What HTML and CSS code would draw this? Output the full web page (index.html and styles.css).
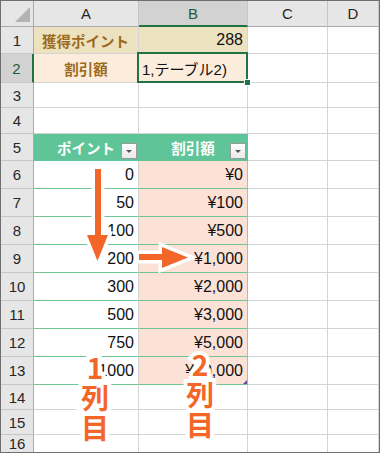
FILE: index.html
```html
<!DOCTYPE html>
<html lang="ja">
  <head>
    <meta charset="UTF-8" />
    <title>割引額</title>
    <link rel="stylesheet" href="styles.css">
  </head>
  <body>
    <div class="sheet">
      <div class="row head-row">
        <div class="cell corner">
          <svg width="32" height="25" viewBox="0 0 32 25"><polygon points="29,6 29,21 14,21" fill="#b4b4b4"/></svg>
        </div>
        <div class="cell col-head">A</div>
        <div class="cell col-head active">B</div>
        <div class="cell col-head">C</div>
        <div class="cell col-head">D</div>
      </div>

      <div class="row r1">
        <div class="cell row-head">1</div>
        <div class="cell points-cell label">獲得ポイント</div>
        <div class="cell points-cell num">288</div>
        <div class="cell"></div>
        <div class="cell"></div>
      </div>

      <div class="row r2">
        <div class="cell row-head active">2</div>
        <div class="cell rate-cell label center">割引額</div>
        <div class="cell rate-cell formula selected">1,テーブル2)<span class="fill-handle"></span></div>
        <div class="cell"></div>
        <div class="cell"></div>
      </div>

      <div class="row r3">
        <div class="cell row-head">3</div>
        <div class="cell"></div>
        <div class="cell"></div>
        <div class="cell"></div>
        <div class="cell"></div>
      </div>

      <div class="row r4">
        <div class="cell row-head">4</div>
        <div class="cell"></div>
        <div class="cell"></div>
        <div class="cell"></div>
        <div class="cell"></div>
      </div>

      <div class="row r5">
        <div class="cell row-head">5</div>
        <div class="cell table-head">ポイント<span class="filter"></span></div>
        <div class="cell table-head">割引額<span class="filter"></span></div>
        <div class="cell"></div>
        <div class="cell"></div>
      </div>

      <div class="row">
        <div class="cell row-head">6</div>
        <div class="cell t-point num">0</div>
        <div class="cell t-rate num">¥0</div>
        <div class="cell"></div>
        <div class="cell"></div>
      </div>
      <div class="row">
        <div class="cell row-head">7</div>
        <div class="cell t-point num">50</div>
        <div class="cell t-rate num">¥100</div>
        <div class="cell"></div>
        <div class="cell"></div>
      </div>
      <div class="row">
        <div class="cell row-head">8</div>
        <div class="cell t-point num">100</div>
        <div class="cell t-rate num">¥500</div>
        <div class="cell"></div>
        <div class="cell"></div>
      </div>
      <div class="row">
        <div class="cell row-head">9</div>
        <div class="cell t-point num">200</div>
        <div class="cell t-rate num">¥1,000</div>
        <div class="cell"></div>
        <div class="cell"></div>
      </div>
      <div class="row">
        <div class="cell row-head">10</div>
        <div class="cell t-point num">300</div>
        <div class="cell t-rate num">¥2,000</div>
        <div class="cell"></div>
        <div class="cell"></div>
      </div>
      <div class="row">
        <div class="cell row-head">11</div>
        <div class="cell t-point num">500</div>
        <div class="cell t-rate num">¥3,000</div>
        <div class="cell"></div>
        <div class="cell"></div>
      </div>
      <div class="row">
        <div class="cell row-head">12</div>
        <div class="cell t-point num">750</div>
        <div class="cell t-rate num">¥5,000</div>
        <div class="cell"></div>
        <div class="cell"></div>
      </div>
      <div class="row">
        <div class="cell row-head">13</div>
        <div class="cell t-point num">1000</div>
        <div class="cell t-rate num last">¥10,000<span class="resize"></span></div>
        <div class="cell"></div>
        <div class="cell"></div>
      </div>

      <div class="row r14">
        <div class="cell row-head">14</div>
        <div class="cell"></div>
        <div class="cell"></div>
        <div class="cell"></div>
        <div class="cell"></div>
      </div>
      <div class="row r15">
        <div class="cell row-head">15</div>
        <div class="cell"></div>
        <div class="cell"></div>
        <div class="cell"></div>
        <div class="cell"></div>
      </div>
      <div class="row r16">
        <div class="cell row-head">16</div>
        <div class="cell"></div>
        <div class="cell"></div>
        <div class="cell"></div>
        <div class="cell"></div>
      </div>

      <!-- annotations drawn over the sheet -->
      <svg class="marks" width="380" height="453" viewBox="0 0 380 453">
        <path d="M95 169 H101 V235 H108 L97.5 261 L87 235 H95 Z" />
        <path d="M139 254 H162 V247 L188 257.5 L162 268 V260 H139 Z" />
      </svg>
      <div class="note note1">1<br>列<br>目</div>
      <div class="note note2">2<br>列<br>目</div>
    </div>
  </body>
</html>
```

FILE: styles.css
```css
body {
  margin: 0;
  font-family: "Liberation Sans", "Noto Sans CJK JP", sans-serif;
  font-size: 16px;
  color: #111;
}
.sheet {
  position: relative;
  width: 380px;
  height: 453px;
  box-sizing: border-box;
  border: 1px solid #6f6f6f;
  display: flex;
  flex-direction: column;
  overflow: hidden;
  background: #fff;
}
.row {
  display: grid;
  grid-template-columns: 33px 105px 109px 80px 1fr;
  height: 28px;
  flex-shrink: 0;
}
.head-row { height: 26px; }
.r1 { height: 27px; }
.r2 { height: 29px; }
.r3 { height: 25px; }
.r4 { height: 26px; }
.r5 { height: 27px; }
.r14, .r15 { height: 25px; }
.r16 { flex: 1; }

.cell {
  box-sizing: border-box;
  border-right: 1px solid #d4d4d4;
  border-bottom: 1px solid #d4d4d4;
  display: flex;
  align-items: center;
  padding: 0 4px;
  white-space: nowrap;
  overflow: hidden;
}
.num { justify-content: flex-end; }
.center { justify-content: center; }

/* headers */
.corner {
  background: #e6e6e6;
  border-right-color: #ababab;
  border-bottom-color: #ababab;
  padding: 0;
}
.col-head {
  background: #e6e6e6;
  justify-content: center;
  font-size: 15px;
  color: #262626;
  border-right-color: #c6c6c6;
  border-bottom-color: #ababab;
}
.col-head.active {
  background: #d2d2d2;
  border-bottom: 2px solid #217346;
  color: #1d5a36;
}
.row-head {
  background: #e6e6e6;
  justify-content: center;
  font-size: 15px;
  color: #262626;
  border-right-color: #ababab;
  border-bottom-color: #c6c6c6;
  padding: 0;
}
.row-head.active {
  background: #d2d2d2;
  border-right: 2px solid #217346;
  color: #1d5a36;
}

/* input cells */
.label {
  font-weight: bold;
  font-size: 14.5px;
  color: #9c6a1c;
}
.points-cell { background: #ece2c0; }
.points-cell.label { padding-left: 8px; }
.rate-cell { background: #fbecdb; }
.formula {
  font-size: 15px;
  padding-left: 3px;
}
.selected {
  position: relative;
  overflow: visible;
}
.selected::after {
  content: "";
  position: absolute;
  top: -2px;
  left: -2px;
  right: -1px;
  bottom: -1px;
  border: 2px solid #217346;
}
.fill-handle {
  position: absolute;
  right: -4px;
  bottom: -4px;
  width: 5px;
  height: 5px;
  background: #217346;
  border: 1px solid #fff;
  z-index: 1;
}

/* table */
.table-head {
  position: relative;
  background: #5fc598;
  border-color: #5fc598;
  color: #fff;
  font-weight: bold;
  font-size: 14.5px;
  justify-content: center;
}
.filter {
  position: absolute;
  right: 1px;
  bottom: 1px;
  width: 14px;
  height: 14px;
  border: 1px solid #9a9a9a;
  background: linear-gradient(#ffffff, #e9e9e9);
}
.filter::after {
  content: "";
  position: absolute;
  left: 4px;
  top: 6px;
  border-left: 3px solid transparent;
  border-right: 3px solid transparent;
  border-top: 3px solid #555;
}
.t-point {
  border-bottom-color: #72c497;
}
.t-rate {
  background: #fce1d6;
  border-bottom-color: #72c497;
  border-right-color: #9cc6a6;
}
.last { position: relative; }
.resize {
  position: absolute;
  right: 0;
  bottom: 0;
  border-left: 4px solid transparent;
  border-bottom: 4px solid #5a4d96;
}

/* annotations */
.marks {
  position: absolute;
  top: -1px;
  left: -1px;
}
.marks path {
  fill: #f3662a;
  stroke: #fff;
  stroke-width: 7;
  stroke-linejoin: miter;
  paint-order: stroke fill;
}
.note {
  position: absolute;
  width: 44px;
  text-align: center;
  font-family: "Noto Sans CJK JP", sans-serif;
  font-weight: bold;
  font-size: 28px;
  line-height: 30px;
  color: #f3662a;
  -webkit-text-stroke: 8px #fff;
  paint-order: stroke fill;
}
.note1 {
  top: 351px;
  left: 72px;
}
.note2 {
  top: 348px;
  left: 177px;
}
```
